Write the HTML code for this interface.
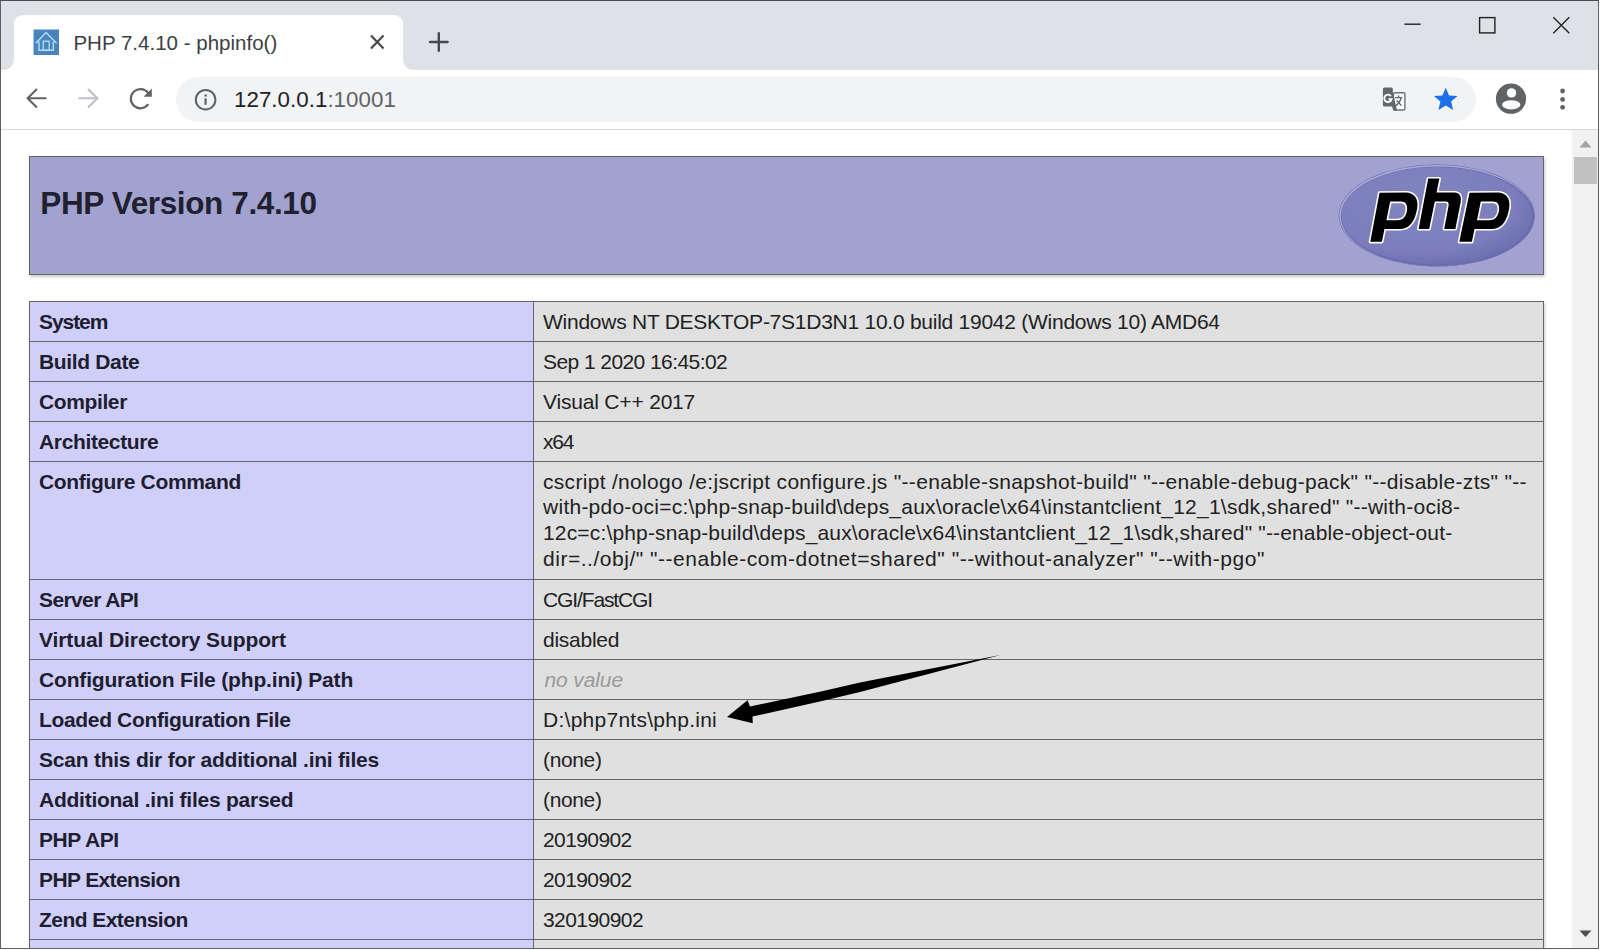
<!DOCTYPE html>
<html><head><meta charset="utf-8"><title>PHP 7.4.10 - phpinfo()</title>
<style>
html,body{margin:0;padding:0;width:1600px;height:950px;overflow:hidden;background:#fff;}
body{position:relative;font-family:"Liberation Sans",sans-serif;}
.t{position:absolute;white-space:nowrap;line-height:26px;}
.hl{position:absolute;left:29px;width:1515px;height:1px;background:#666;}
.vl{position:absolute;width:1px;background:#666;}
svg{position:absolute;overflow:visible;}
</style></head><body>
<!-- tab strip -->
<div style="position:absolute;left:0;top:0;width:1600px;height:70px;background:#dee1e6"></div>
<!-- active tab -->
<svg style="left:0;top:0" width="420" height="72" viewBox="0 0 420 72">
<path d="M2 70 Q14 70 14 58 L14 25 Q14 15 24 15 L393 15 Q403 15 403 25 L403 58 Q403 70 415 70 Z" fill="#fff"/>
</svg>
<!-- favicon -->
<svg style="left:33px;top:29px" width="26" height="26" viewBox="0 0 26 26">
<rect x="0.5" y="0.5" width="25.5" height="25.5" fill="#4a84bd"/>
<path d="M2.8 14.2 L13.1 3.5 L23.6 14.2" fill="none" stroke="#b6dcf8" stroke-width="1.5"/>
<path d="M6 12.5 L6 21.2 L20.3 21.2 L20.3 12.5" fill="none" stroke="#b6dcf8" stroke-width="1.4"/>
<rect x="10.2" y="12.2" width="6" height="9" fill="none" stroke="#b6dcf8" stroke-width="1.3"/>
</svg>
<div class="t" style="left:73.40px;top:30.00px;font-size:20.5px;letter-spacing:0.014px;color:#3c4043;font-weight:normal;font-style:normal;">PHP 7.4.10 - phpinfo()</div>

<!-- tab close -->
<svg style="left:0;top:0" width="460" height="70">
<path d="M371 35.5 L383.5 48.5 M383.5 35.5 L371 48.5" stroke="#45484c" stroke-width="2.2" fill="none"/>
<path d="M438.8 33.3 L438.8 50.8 M430 42 L447.6 42" stroke="#45484c" stroke-width="2.4" fill="none" stroke-linecap="round"/>
</svg>
<!-- window controls -->
<svg style="left:1390px;top:5px" width="200" height="40">
<path d="M14.4 19.2 L30.6 19.2" stroke="#202020" stroke-width="1.4"/>
<rect x="89.6" y="12.6" width="15.3" height="15.3" fill="none" stroke="#202020" stroke-width="1.4"/>
<path d="M163.3 12.3 L179.3 28.3 M179.3 12.3 L163.3 28.3" stroke="#202020" stroke-width="1.3"/>
</svg>
<!-- toolbar -->
<div style="position:absolute;left:0;top:70px;width:1600px;height:58px;background:#fff"></div>
<div style="position:absolute;left:0;top:129px;width:1600px;height:1px;background:#d6d8db"></div>
<!-- nav icons -->
<svg style="left:0;top:70px" width="170" height="58">
<path d="M46.5 28.3 L28 28.3 M37 19 L27.6 28.3 L37 37.6" stroke="#5f6368" stroke-width="2.1" fill="none"/>
<path d="M78.5 28.3 L97 28.3 M88 19 L97.4 28.3 L88 37.6" stroke="#bdc1c6" stroke-width="2.1" fill="none"/>
<path d="M148.3 34.2 A9.6 9.6 0 1 1 148.3 23.2" stroke="#606366" stroke-width="2.2" fill="none"/>
<path d="M151.8 18.6 L151.8 26.8 L143.6 26.8 Z" fill="#5f6368"/>
</svg>
<!-- omnibox -->
<div style="position:absolute;left:176px;top:77px;width:1300px;height:45px;border-radius:22.5px;background:#f1f3f4"></div>
<svg style="left:194px;top:88px" width="24" height="24" viewBox="0 0 24 24">
<circle cx="11.6" cy="11.7" r="9.8" fill="none" stroke="#5f6368" stroke-width="2"/>
<rect x="10.5" y="10.3" width="2.2" height="6.5" fill="#5f6368"/>
<rect x="10.5" y="6.4" width="2.2" height="2.2" fill="#5f6368"/>
</svg>
<div class="t" style="left:234.00px;top:87.27px;font-size:22.3px;letter-spacing:0.043px;color:#202124">127.0.0.1<span style="color:#5f6368">:10001</span></div>

<!-- translate icon -->
<svg style="left:1378px;top:84px" width="34" height="32" viewBox="0 0 34 32">
<rect x="15.4" y="8.7" width="11.5" height="17.3" rx="1.3" fill="#f8f9fa" stroke="#6f7276" stroke-width="1.4"/>
<path d="M6.4 3.5 L13.4 3.5 Q14.8 3.5 14.8 5 L14.8 8 L19 26.6 L15.4 26.6 L14.2 22.6 L6.4 22.6 Q4.9 22.6 4.9 21.1 L4.9 5 Q4.9 3.5 6.4 3.5 Z" fill="#646769"/>
<path d="M13 12.2 A3.7 3.7 0 1 0 13.6 15.2 L10.6 15.2" stroke="#fff" stroke-width="1.9" fill="none"/>
<path d="M17 13.6 L24.2 13.6 M20.6 11.4 L20.6 13.6 M23.3 13.8 Q21.5 19.5 17 22.2 M18.8 16.5 L23.4 21.6" stroke="#606367" stroke-width="1.3" fill="none"/>
</svg>
<!-- star -->
<svg style="left:1432.1px;top:85.2px" width="27.5" height="27.5" viewBox="0 0 24 24">
<path d="M12 2.3 L14.9 9.1 L22.3 9.7 L16.7 14.5 L18.4 21.8 L12 17.9 L5.6 21.8 L7.3 14.5 L1.7 9.7 L9.1 9.1 Z" fill="#1b72e6"/>
</svg>
<!-- profile -->
<svg style="left:1494px;top:82px" width="34" height="34" viewBox="0 0 34 34">
<circle cx="17" cy="16.7" r="15.1" fill="#606366"/>
<circle cx="17.5" cy="10.9" r="4.7" fill="#fff"/>
<ellipse cx="17.2" cy="22.8" rx="9.2" ry="4.6" fill="#fff"/>
</svg>
<!-- menu -->
<svg style="left:1555px;top:85.6px" width="16" height="28">
<circle cx="7.6" cy="5.0" r="2.4" fill="#5f6368"/>
<circle cx="7.6" cy="13.4" r="2.4" fill="#5f6368"/>
<circle cx="7.6" cy="21.3" r="2.4" fill="#5f6368"/>
</svg>

<!-- content -->
<div style="position:absolute;left:1px;top:130px;width:1571px;height:818px;background:#fff;overflow:hidden">
<div style="position:absolute;left:-1px;top:-130px;width:1600px;height:1200px">
<!-- header box -->
<div style="position:absolute;left:29px;top:156px;width:1513px;height:117px;background:#a1a2d0;border:1px solid #666;box-shadow:1px 2px 3px #ccc"></div>
<div class="t" style="left:40.30px;top:190.39px;font-size:31.5px;letter-spacing:-0.376px;color:#20202e;font-weight:bold;font-style:normal;">PHP Version 7.4.10</div>

<!-- php logo -->
<svg style="left:0;top:0" width="1600" height="300">
<defs>
<radialGradient id="lg" cx="0.42" cy="0.38" r="0.65">
<stop offset="0" stop-color="#8185c0"/>
<stop offset="0.75" stop-color="#7b7eba"/>
<stop offset="1" stop-color="#6d70b0"/>
</radialGradient>
</defs>
<ellipse cx="1436.8" cy="215.5" rx="98" ry="51" fill="#6466aa"/>
<ellipse cx="1436.8" cy="215.5" rx="97.5" ry="50.5" fill="#a9abd8"/>
<ellipse cx="1437.6" cy="216.3" rx="96.8" ry="49.8" fill="#6a6cae"/>
<ellipse cx="1436.6" cy="215.6" rx="95.3" ry="48.6" fill="url(#lg)"/>
<g fill="#000" stroke="#fff" stroke-width="3.2" stroke-linejoin="round" paint-order="stroke">
<path d="M1379.5 192.8 L1405.5 192.6 C1414.5 192.6 1418.6 199 1417.2 208 C1415.6 219 1410.5 229 1400.5 229 L1384.5 229 L1381.9 241.8 L1370.3 241.8 Z M1390.2 201.6 L1386.4 220.3 L1397.5 220.3 C1403 220.3 1406.2 216 1407 210.5 C1407.8 205 1405.6 201.6 1401 201.6 Z"/>
<path d="M1428.2 178.6 L1439.4 178.6 L1436.6 192.6 L1454.5 192.6 C1460 192.6 1461.6 197 1460.6 202.5 L1455.4 229 L1444.2 229 L1448.6 205.5 C1449 203 1448.2 201.4 1445.6 201.4 L1434.8 201.4 L1429.2 229 L1418.6 229 Z"/>
<path d="M1469.5 192.8 L1497.5 192.6 C1506.5 192.6 1510.6 199 1509.2 208 C1507.6 219 1502.5 229 1492.5 229 L1474.5 229 L1471.9 241.8 L1459.3 241.8 Z M1480.8 201.6 L1477 220.3 L1489.5 220.3 C1495 220.3 1498.2 216 1499 210.5 C1499.8 205 1497.6 201.6 1493 201.6 Z"/>
</g>
</svg>
<div style="position:absolute;left:29px;top:301px;width:1515px;height:700px;box-shadow:1px 2px 3px #ccc"></div>
<div style="position:absolute;left:29px;top:301px;width:505px;height:679px;background:#cfcff9"></div>
<div style="position:absolute;left:534px;top:301px;width:1010px;height:679px;background:#e0e0e0"></div>
<div class="hl" style="top:301px"></div>
<div class="hl" style="top:341px"></div>
<div class="hl" style="top:381px"></div>
<div class="hl" style="top:421px"></div>
<div class="hl" style="top:461px"></div>
<div class="hl" style="top:579px"></div>
<div class="hl" style="top:619px"></div>
<div class="hl" style="top:659px"></div>
<div class="hl" style="top:699px"></div>
<div class="hl" style="top:739px"></div>
<div class="hl" style="top:779px"></div>
<div class="hl" style="top:819px"></div>
<div class="hl" style="top:859px"></div>
<div class="hl" style="top:899px"></div>
<div class="hl" style="top:939px"></div>
<div class="vl" style="left:29px;top:301px;height:679px"></div>
<div class="vl" style="left:533px;top:301px;height:679px"></div>
<div class="vl" style="left:1543px;top:301px;height:679px"></div>
<div class="t" style="left:39.00px;top:308.62px;font-size:21px;letter-spacing:-1.060px;color:#1e1e30;font-weight:bold;font-style:normal;">System</div>
<div class="t" style="left:543.00px;top:308.62px;font-size:21px;letter-spacing:-0.254px;color:#222;font-weight:normal;font-style:normal;">Windows NT DESKTOP-7S1D3N1 10.0 build 19042 (Windows 10) AMD64</div>
<div class="t" style="left:39.00px;top:348.62px;font-size:21px;letter-spacing:-0.344px;color:#1e1e30;font-weight:bold;font-style:normal;">Build Date</div>
<div class="t" style="left:543.00px;top:348.62px;font-size:21px;letter-spacing:-0.572px;color:#222;font-weight:normal;font-style:normal;">Sep 1 2020 16:45:02</div>
<div class="t" style="left:39.00px;top:388.62px;font-size:21px;letter-spacing:-0.386px;color:#1e1e30;font-weight:bold;font-style:normal;">Compiler</div>
<div class="t" style="left:543.00px;top:388.62px;font-size:21px;letter-spacing:-0.186px;color:#222;font-weight:normal;font-style:normal;">Visual C++ 2017</div>
<div class="t" style="left:39.00px;top:428.62px;font-size:21px;letter-spacing:-0.355px;color:#1e1e30;font-weight:bold;font-style:normal;">Architecture</div>
<div class="t" style="left:543.00px;top:428.62px;font-size:21px;letter-spacing:-1.250px;color:#222;font-weight:normal;font-style:normal;">x64</div>
<div class="t" style="left:39.00px;top:468.62px;font-size:21px;letter-spacing:-0.337px;color:#1e1e30;font-weight:bold;font-style:normal;">Configure Command</div>
<div class="t" style="left:543.00px;top:468.62px;font-size:21px;letter-spacing:0.308px;color:#222;font-weight:normal;font-style:normal;">cscript /nologo /e:jscript configure.js "--enable-snapshot-build" "--enable-debug-pack" "--disable-zts" "--</div>
<div class="t" style="left:543.10px;top:494.47px;font-size:21px;letter-spacing:0.238px;color:#222;font-weight:normal;font-style:normal;">with-pdo-oci=c:\php-snap-build\deps_aux\oracle\x64\instantclient_12_1\sdk,shared" "--with-oci8-</div>
<div class="t" style="left:543.00px;top:520.32px;font-size:21px;letter-spacing:0.157px;color:#222;font-weight:normal;font-style:normal;">12c=c:\php-snap-build\deps_aux\oracle\x64\instantclient_12_1\sdk,shared" "--enable-object-out-</div>
<div class="t" style="left:543.00px;top:546.17px;font-size:21px;letter-spacing:0.526px;color:#222;font-weight:normal;font-style:normal;">dir=../obj/" "--enable-com-dotnet=shared" "--without-analyzer" "--with-pgo"</div>
<div class="t" style="left:39.00px;top:586.62px;font-size:21px;letter-spacing:-0.611px;color:#1e1e30;font-weight:bold;font-style:normal;">Server API</div>
<div class="t" style="left:543.00px;top:586.62px;font-size:21px;letter-spacing:-1.120px;color:#222;font-weight:normal;font-style:normal;">CGI/FastCGI</div>
<div class="t" style="left:39.00px;top:626.62px;font-size:21px;letter-spacing:-0.100px;color:#1e1e30;font-weight:bold;font-style:normal;">Virtual Directory Support</div>
<div class="t" style="left:543.00px;top:626.62px;font-size:21px;letter-spacing:-0.257px;color:#222;font-weight:normal;font-style:normal;">disabled</div>
<div class="t" style="left:39.00px;top:666.62px;font-size:21px;letter-spacing:-0.169px;color:#1e1e30;font-weight:bold;font-style:normal;">Configuration File (php.ini) Path</div>
<div class="t" style="left:544.40px;top:666.62px;font-size:21px;letter-spacing:-0.100px;color:#999;font-weight:normal;font-style:italic;">no value</div>
<div class="t" style="left:39.00px;top:706.62px;font-size:21px;letter-spacing:-0.342px;color:#1e1e30;font-weight:bold;font-style:normal;">Loaded Configuration File</div>
<div class="t" style="left:543.00px;top:706.62px;font-size:21px;letter-spacing:0.265px;color:#222;font-weight:normal;font-style:normal;">D:\php7nts\php.ini</div>
<div class="t" style="left:39.00px;top:746.62px;font-size:21px;letter-spacing:-0.229px;color:#1e1e30;font-weight:bold;font-style:normal;">Scan this dir for additional .ini files</div>
<div class="t" style="left:543.00px;top:746.62px;font-size:21px;letter-spacing:-0.360px;color:#222;font-weight:normal;font-style:normal;">(none)</div>
<div class="t" style="left:39.00px;top:786.62px;font-size:21px;letter-spacing:-0.252px;color:#1e1e30;font-weight:bold;font-style:normal;">Additional .ini files parsed</div>
<div class="t" style="left:543.00px;top:786.62px;font-size:21px;letter-spacing:-0.360px;color:#222;font-weight:normal;font-style:normal;">(none)</div>
<div class="t" style="left:39.00px;top:826.62px;font-size:21px;letter-spacing:-0.450px;color:#1e1e30;font-weight:bold;font-style:normal;">PHP API</div>
<div class="t" style="left:543.00px;top:826.62px;font-size:21px;letter-spacing:-0.600px;color:#222;font-weight:normal;font-style:normal;">20190902</div>
<div class="t" style="left:39.00px;top:866.62px;font-size:21px;letter-spacing:-0.625px;color:#1e1e30;font-weight:bold;font-style:normal;">PHP Extension</div>
<div class="t" style="left:543.00px;top:866.62px;font-size:21px;letter-spacing:-0.600px;color:#222;font-weight:normal;font-style:normal;">20190902</div>
<div class="t" style="left:39.00px;top:906.62px;font-size:21px;letter-spacing:-0.546px;color:#1e1e30;font-weight:bold;font-style:normal;">Zend Extension</div>
<div class="t" style="left:543.00px;top:906.62px;font-size:21px;letter-spacing:-0.562px;color:#222;font-weight:normal;font-style:normal;">320190902</div>
<div class="t" style="left:39.00px;top:946.62px;font-size:21px;letter-spacing:0.000px;color:#222;font-weight:bold;font-style:normal;">Zend Extension Build</div>
<div class="t" style="left:543.00px;top:946.62px;font-size:21px;letter-spacing:0.000px;color:#222;font-weight:normal;font-style:normal;">API320190902,NTS,VC15</div>

<!-- arrow -->
<svg style="left:0;top:0" width="1100" height="800">
<path d="M727 717 L747.5 700.25 L750 706.5 L822 691.2 L860 682.5 L1000.5 655 L860 692 L822 701 L752.5 716.5 L752.75 723.25 Z" fill="#000"/>
</svg>
</div>
</div>
<!-- scrollbar -->
<div style="position:absolute;left:1572px;top:130px;width:26px;height:818px;background:#f1f1f1"></div>
<div style="position:absolute;left:1574px;top:157px;width:23px;height:27px;background:#c1c1c1"></div>
<svg style="left:1572px;top:129px" width="26" height="819">
<path d="M7.5 18.5 L13.5 11.5 L19.5 18.5 Z" fill="#a3a3a3"/>
<path d="M7.5 801.5 L13.5 808 L19.5 801.5 Z" fill="#505050"/>
</svg>
<!-- window border -->
<div style="position:absolute;left:0;top:0;width:1597px;height:947px;border:1px solid #5c6064;border-top-color:#4a4e52"></div>
<div style="position:absolute;left:1599px;top:0;width:1px;height:950px;background:#fff"></div>
<div style="position:absolute;left:0;top:949px;width:1600px;height:1px;background:#fff"></div>
</body></html>
